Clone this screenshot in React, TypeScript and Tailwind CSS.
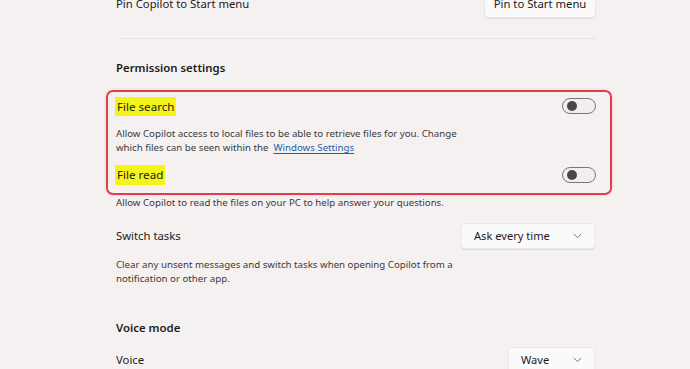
import React from "react";

const Toggle = () => (
  <div className="w-[34px] h-[16px] rounded-full border border-[#7a7676] flex items-center pl-[4px] bg-[#f3eeee]">
    <div className="w-[10px] h-[10px] rounded-full bg-[#4a4747]" />
  </div>
);

const Chevron = () => (
  <svg width="9" height="6" viewBox="0 0 9 6" fill="none">
    <path d="M1 1.2 L4.5 4.6 L8 1.2" stroke="#7a7676" strokeWidth="1" strokeLinecap="round" strokeLinejoin="round" />
  </svg>
);

export default function App() {
  return (
    <div
      className="w-[690px] h-[369px] overflow-hidden bg-[#f6f1f1] text-[#1c1b1b]"
      style={{ fontFamily: '"Segoe UI", "Noto Sans", "Open Sans", sans-serif' }}
    >
      <div className="pl-[116px] pr-[95px]">
        <div className="-mt-[10px] h-[28px] flex items-center justify-between">
          <span className="text-[11.3px]">Pin Copilot to Start menu</span>
          <div className="h-[28px] w-[112px] mr-[-1px] rounded-[5px] bg-[#fbfafa] border border-[#ece7e7] shadow-[0_1px_0_#e2dcdc] flex items-center justify-center text-[11.3px]">
            Pin to Start menu
          </div>
        </div>
        <div className="mt-[20px] h-px bg-[#e7e2e2] ml-[4px]" />
        <div className="mt-[19px] h-[20px] leading-[20px] text-[11.4px] font-semibold">Permission settings</div>

        <div className="mt-[12px] -ml-[10px] -mr-[17px] border-2 border-[#dc3f4d] rounded-[7px] pl-[7px] pr-[14px] pb-[8px] shadow-[0_0_3px_rgba(220,63,77,0.25)]">
          <div className="mt-[4px] h-[20px] flex items-center justify-between">
            <span className="bg-[#f4f41a] px-[2px] h-[19px] leading-[19px] text-[11.6px]">File search</span>
            <Toggle />
          </div>
          <div className="mt-[11px] pl-[1px] text-[9.7px] leading-[14px] text-[#3b3939]">
            Allow Copilot access to local files to be able to retrieve files for you. Change
            <br />
            which files can be seen within the&nbsp;{" "}
            <span className="text-[#1f5fa6] underline underline-offset-2 decoration-[#1f5fa6]">Windows Settings</span>
          </div>
          <div className="mt-[10px] h-[20px] flex items-center justify-between">
            <span className="bg-[#f4f41a] px-[2px] h-[20px] leading-[20px] text-[11.6px]">File read</span>
            <Toggle />
          </div>
        </div>

        <div className="mt-[1px] text-[9.7px] leading-[14px] text-[#3b3939]">
          Allow Copilot to read the files on your PC to help answer your questions.
        </div>

        <div className="mt-[13px] h-[26px] flex items-center justify-between">
          <span className="text-[11.3px]">Switch tasks</span>
          <div className="h-[26px] w-[134px] rounded-[4px] bg-[#fbfafa] border border-[#ece7e7] shadow-[0_1px_1px_#e0dada] flex items-center justify-between pl-[12px] pr-[12px] text-[11.1px]">
            <span>Ask every time</span>
            <Chevron />
          </div>
        </div>

        <div className="mt-[9px] text-[9.7px] leading-[14px] text-[#3b3939]">
          Clear any unsent messages and switch tasks when opening Copilot from a
          <br />
          notification or other app.
        </div>

        <div className="mt-[32px] h-[20px] leading-[20px] text-[11.4px] font-semibold">Voice mode</div>

        <div className="mt-[9px] h-[26px] flex items-center justify-between">
          <span className="text-[11.3px]">Voice</span>
          <div className="h-[26px] w-[87px] rounded-[4px] bg-[#fbfafa] border border-[#ece7e7] flex items-center justify-between pl-[12px] pr-[12px] text-[11.1px]">
            <span>Wave</span>
            <Chevron />
          </div>
        </div>
      </div>
    </div>
  );
}
